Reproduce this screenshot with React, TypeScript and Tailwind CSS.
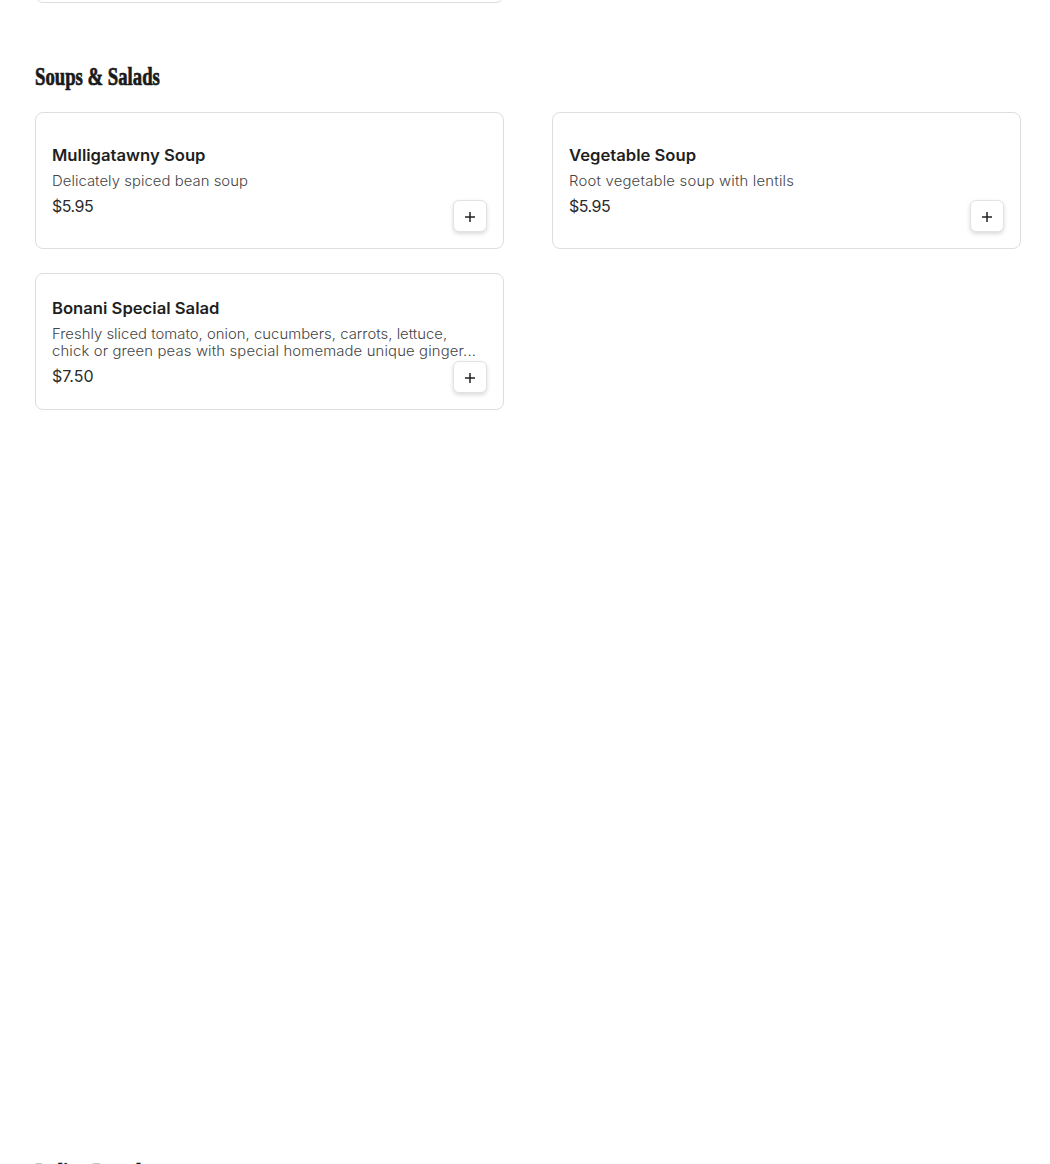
type MenuItem = {
  name: string;
  description: { text: string; spacing: string }[];
  price: string;
  priceSpacing: string;
};

const items: MenuItem[] = [
  {
    name: "Mulligatawny Soup",
    description: [
      { text: "Delicately spiced bean soup", spacing: "tracking-[0.05px]" },
    ],
    price: "$5.95",
    priceSpacing: "tracking-[-0.5px]",
  },
  {
    name: "Vegetable Soup",
    description: [
      { text: "Root vegetable soup with lentils", spacing: "tracking-[0.2px]" },
    ],
    price: "$5.95",
    priceSpacing: "tracking-[-0.5px]",
  },
  {
    name: "Bonani Special Salad",
    description: [
      {
        text: "Freshly sliced tomato, onion, cucumbers, carrots, lettuce,",
        spacing: "tracking-[0.02px]",
      },
      {
        text: "chick or green peas with special homemade unique ginger...",
        spacing: "tracking-[0.14px]",
      },
    ],
    price: "$7.50",
    priceSpacing: "tracking-normal",
  },
];

const SectionTitle = ({ title }: { title: string }) => (
  <h2 className="h-[34px] w-max origin-left scale-x-[0.72] whitespace-nowrap font-['Liberation_Serif',serif] text-[26px] font-bold leading-[34px] text-[#1a1a1a] [-webkit-text-stroke:0.7px_#1a1a1a]">
    {title}
  </h2>
);

const MenuCard = ({ item }: { item: MenuItem }) => (
  <div className="flex h-[137px] justify-between rounded-lg border border-[#dedede] px-4">
    <div className="flex flex-col justify-center">
      <h3 className="w-max origin-left scale-x-[1.04] text-base font-semibold leading-5 text-[#1f1f1f]">
        {item.name}
      </h3>
      <div className="mt-[7px] text-sm font-light leading-[17px] text-[#444]">
        {item.description.map((line) => (
          <p
            key={line.text}
            className={`w-max origin-left scale-x-[1.06] ${line.spacing}`}
          >
            {line.text}
          </p>
        ))}
      </div>
      <p
        className={`mt-[7px] text-base leading-5 text-[#2b2b2b] ${item.priceSpacing}`}
      >
        {item.price}
      </p>
    </div>
    <button className="-ml-10 mb-4 flex h-8 w-[34px] shrink-0 items-center justify-center self-end rounded-md border border-[#e2e2e2] bg-white shadow-[0_2px_4px_rgba(0,0,0,0.15)]">
      <svg width="10" height="10" viewBox="0 0 10 10" className="mt-px">
        <path d="M5 0v10M0 5h10" stroke="#222" strokeWidth="1.5" />
      </svg>
    </button>
  </div>
);

export default function App() {
  return (
    <div className="flex h-[1164px] flex-col overflow-hidden bg-white pl-[35px] pr-[29px] font-['Inter','Liberation_Sans',sans-serif]">
      <div className="h-[3px] w-[469px] shrink-0 overflow-hidden">
        <div className="-mt-5 h-[23px] rounded-b-lg border border-[#dedede]" />
      </div>
      <section className="mt-[57px] h-[1096px] shrink-0">
        <SectionTitle title="Soups & Salads" />
        <div className="mt-[18px] grid grid-cols-2 gap-x-12 gap-y-6">
          {items.map((item) => (
            <MenuCard key={item.name} item={item} />
          ))}
        </div>
      </section>
      <section className="shrink-0">
        <SectionTitle title="Indian Breads" />
      </section>
    </div>
  );
}
